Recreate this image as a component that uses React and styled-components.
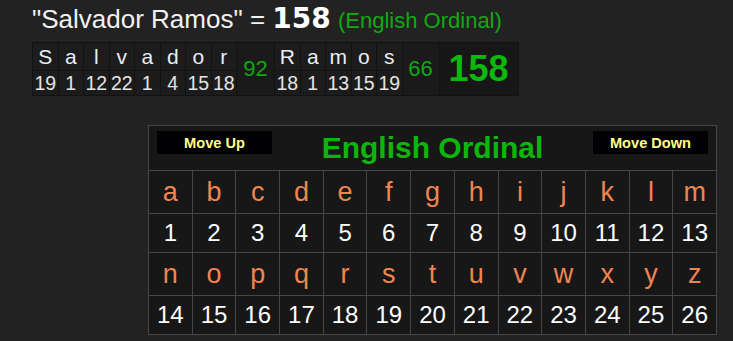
import React from "react";
import styled, { createGlobalStyle } from "styled-components";

const Global = createGlobalStyle`
  html, body { margin: 0; padding: 0; background: #222222; }
  body { font-family: "Liberation Sans", Arial, sans-serif; }
  #root { width: 733px; height: 341px; overflow: hidden; }
`;

const Page = styled.div`
  display: flex;
  flex-direction: column;
  align-items: flex-start;
  padding-left: 32px;
`;

const Title = styled.div`
  margin-top: 2px;
  height: 34px;
  line-height: 34px;
  margin-bottom: 6px;
  font-size: 26px;
  color: #f2f2f2;
  white-space: nowrap;
`;

const TitleTotal = styled.span`
  font-family: "DejaVu Sans", sans-serif;
  font-weight: bold;
  font-size: 28px;
  color: #ffffff;
`;

const TitleCipher = styled.span`
  font-size: 22px;
  color: #11aa11;
`;

const Breakdown = styled.div`
  display: flex;
  gap: 1px;
  padding: 1px;
  background: #121212;
`;

const LetterCol = styled.div`
  display: flex;
  flex-direction: column;
  gap: 1px;
`;

const LetterCell = styled.div`
  width: 24.5px;
  height: 27px;
  background: #1c1c1c;
  color: #e8eef4;
  font-size: 21px;
  display: flex;
  align-items: center;
  justify-content: center;
  white-space: nowrap;
`;

const ValueCell = styled(LetterCell)`
  height: 24px;
  font-size: 19.5px;
  color: #e4e4e4;
`;

const SumCell = styled.div`
  width: ${(p) => p.$w}px;
  background: ${(p) => (p.$total ? "#171717" : "#1a1a1a")};
  color: ${(p) => (p.$total ? "#0cb80c" : "#12a812")};
  font-size: ${(p) => (p.$total ? "36px" : "22px")};
  font-weight: ${(p) => (p.$total ? "bold" : "normal")};
  display: flex;
  align-items: center;
  justify-content: center;
`;

const Chart = styled.div`
  margin-left: 116px;
  margin-top: 29px;
  width: 569px;
  box-sizing: border-box;
  display: grid;
  grid-template-columns: repeat(13, 1fr);
  grid-template-rows: 44px 42px 38px 42px 38px;
  gap: 1px;
  padding: 1px;
  background: #464646;
`;

const Header = styled.div`
  grid-column: 1 / -1;
  background: #171717;
  display: flex;
  align-items: center;
  justify-content: space-between;
  padding: 0 8px;
`;

const MoveButton = styled.div`
  align-self: flex-start;
  margin-top: 5px;
  width: 115px;
  height: 23px;
  background: #010104;
  color: #ffff88;
  font-weight: bold;
  font-size: 14.6px;
  display: flex;
  align-items: center;
  justify-content: center;
`;

const ChartTitle = styled.div`
  color: #0db50d;
  font-weight: bold;
  font-size: 30px;
`;

const Cell = styled.div`
  background: #171717;
  display: flex;
  align-items: center;
  justify-content: center;
  font-size: ${(p) => (p.$letter ? "27px" : "24px")};
  color: ${(p) => (p.$letter ? "#f08550" : "#ffffff")};
`;

const words = [
  { letters: "Salvador", sum: 92, w: 37 },
  { letters: "Ramos", sum: 66, w: 36 },
];

const val = (c) => c.toLowerCase().charCodeAt(0) - 96;

export default function App() {
  const alpha = "abcdefghijklmnopqrstuvwxyz".split("");
  const rows = [alpha.slice(0, 13), alpha.slice(13)];
  return (
    <>
      <Global />
      <Page>
        <Title>
          "Salvador Ramos" = <TitleTotal>158</TitleTotal>{" "}
          <TitleCipher>(English Ordinal)</TitleCipher>
        </Title>
        <Breakdown>
          {words.map((wd) => (
            <React.Fragment key={wd.letters}>
              {wd.letters.split("").map((c, i) => (
                <LetterCol key={i}>
                  <LetterCell>{c}</LetterCell>
                  <ValueCell>{val(c)}</ValueCell>
                </LetterCol>
              ))}
              <SumCell $w={wd.w}>{wd.sum}</SumCell>
            </React.Fragment>
          ))}
          <SumCell $w={78} $total>
            158
          </SumCell>
        </Breakdown>
        <Chart>
          <Header>
            <MoveButton>Move Up</MoveButton>
            <ChartTitle>English Ordinal</ChartTitle>
            <MoveButton>Move Down</MoveButton>
          </Header>
          {rows.map((r, ri) => (
            <React.Fragment key={ri}>
              {r.map((c) => (
                <Cell key={c} $letter>
                  {c}
                </Cell>
              ))}
              {r.map((c) => (
                <Cell key={c + "n"}>{val(c)}</Cell>
              ))}
            </React.Fragment>
          ))}
        </Chart>
      </Page>
    </>
  );
}
